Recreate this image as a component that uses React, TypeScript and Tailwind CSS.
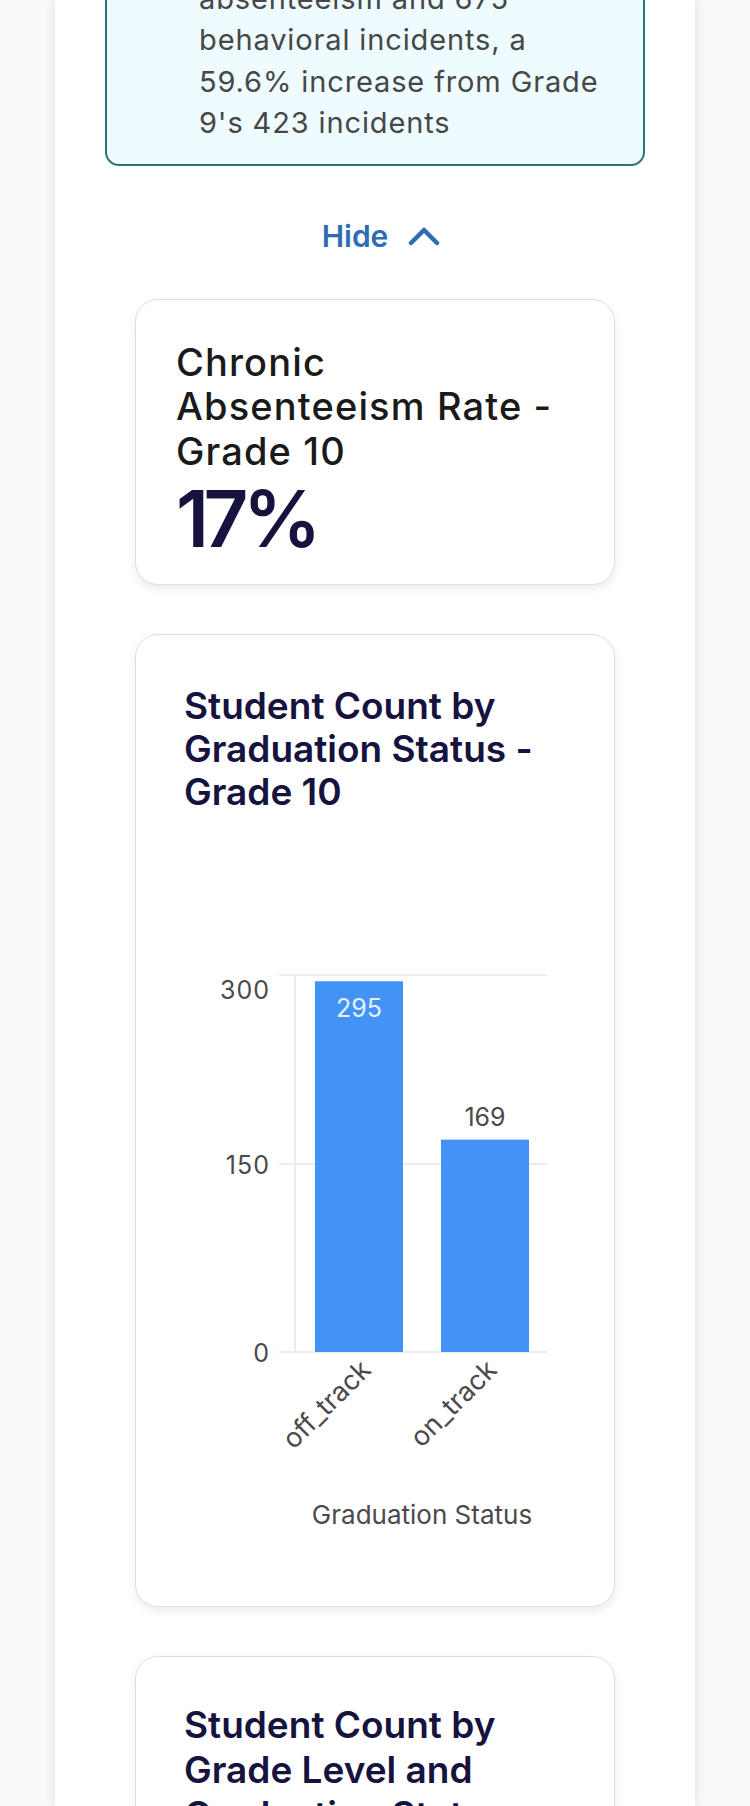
import React from 'react';

const bars = [
  { label: 'off_track', value: 295, x: 179 },
  { label: 'on_track', value: 169, x: 305 },
];

function GraduationChart() {
  // chart coordinates are local to the svg (0,0 = card inner top-left under the title)
  const top = 136;
  const mid = 325;
  const base = 513;
  const perUnit = (base - top) / 300;
  const barWidth = 88;

  return (
    <svg width="478" height="740" viewBox="0 0 478 740" className="mt-[26px] block">
      {[top, mid, base].map((y) => (
        <line key={y} x1={143} x2={411} y1={y} y2={y} stroke="#ececec" strokeWidth={2} />
      ))}
      <line x1={159} x2={159} y1={top} y2={base} stroke="#ececec" strokeWidth={2} />

      <g fontFamily="Inter, sans-serif" fontSize={25} letterSpacing={1} fill="#4a4a4a" textAnchor="end">
        <text x={134} y={160}>300</text>
        <text x={134} y={335}>150</text>
        <text x={134} y={523}>0</text>
      </g>

      {bars.map((b, i) => {
        const h = b.value * perUnit;
        const cx = b.x + barWidth / 2;
        return (
          <g key={b.label} fontFamily="Inter, sans-serif" fontSize={25}>
            <rect x={b.x} y={base - h} width={barWidth} height={h} fill="#4293f5" />
            {i === 0 ? (
              <text x={cx} y={178} textAnchor="middle" fill="#e9f0fd">
                {b.value}
              </text>
            ) : (
              <text x={cx} y={287} textAnchor="middle" fill="#4a4a4a">
                {b.value}
              </text>
            )}
            <text
              x={cx}
              y={519}
              dy="0.71em"
              textAnchor="end"
              fill="#4a4a4a"
              fontSize={27}
              transform={`rotate(-45, ${cx}, 519)`}
            >
              {b.label}
            </text>
          </g>
        );
      })}

      <text x={286} y={685} textAnchor="middle" fontFamily="Inter, sans-serif" fontSize={26} fill="#4a4a4a">
        Graduation Status
      </text>
    </svg>
  );
}

export default function App() {
  return (
    <div className="h-[1806px] overflow-hidden bg-[#f9f9f9] font-['Inter',sans-serif]">
      <div className="ml-[55px] flex h-full w-[640px] flex-col overflow-hidden bg-white shadow-[0_0_10px_rgba(0,0,0,0.12)]">
        {/* insight box, scrolled partly out of view */}
        <div className="mx-[50px] mt-[-86px] rounded-[14px] border-2 border-[#2f6f80] bg-[#eefbff] pb-[20px] pl-[92px] pr-4 pt-[20px] text-[29px] leading-[41.5px] tracking-[0.03em] text-[#474747]">
          Grade 10 shows 17% chronic
          <br />
          absenteeism and 675
          <br />
          behavioral incidents, a
          <br />
          59.6% increase from Grade
          <br />
          9's 423 incidents
        </div>

        <button className="mt-[55px] flex items-center justify-center gap-[20px] pl-3 text-[30px] font-semibold leading-[30px] text-[#2e6db4]">
          Hide
          <svg width="32" height="20" viewBox="0 0 32 20" fill="none">
            <polyline
              points="3,17 16,4 29,17"
              stroke="currentColor"
              strokeWidth={4.5}
              strokeLinecap="round"
              strokeLinejoin="round"
            />
          </svg>
        </button>

        <div className="mx-[80px] mt-[48px] flex flex-col gap-[49px]">
          {/* metric card */}
          <div className="rounded-[23px] border border-[#dedede] bg-white px-10 pb-[26px] pt-10 shadow-[0_4px_10px_rgba(0,0,0,0.08)]">
            <h3 className="text-[38px] font-medium leading-[44.5px] tracking-[0.03em] text-[#1a1a1a]">
              Chronic
              <br />
              Absenteeism Rate -
              <br />
              Grade 10
            </h3>
            <div className="mt-[7px] text-[78px] font-semibold leading-[78px] tracking-[-0.07em] text-[#16133f]">
              17%
            </div>
          </div>

          {/* bar chart card */}
          <div className="rounded-[23px] border border-[#dedede] bg-white pb-[27px] shadow-[0_4px_10px_rgba(0,0,0,0.08)]">
            <h3 className="px-[48px] pt-[49px] text-[37px] font-semibold leading-[43px] text-[#16133f]">
              Student Count by
              <br />
              Graduation Status -
              <br />
              Grade 10
            </h3>
            <GraduationChart />
          </div>

          {/* next chart card, cut off by the viewport */}
          <div className="h-[600px] rounded-[23px] border border-[#dedede] bg-white shadow-[0_4px_10px_rgba(0,0,0,0.08)]">
            <h3 className="px-[48px] pt-[45px] text-[37px] font-semibold leading-[45px] text-[#16133f]">
              Student Count by
              <br />
              Grade Level and
              <br />
              Graduation Status
            </h3>
          </div>
        </div>
      </div>
    </div>
  );
}
